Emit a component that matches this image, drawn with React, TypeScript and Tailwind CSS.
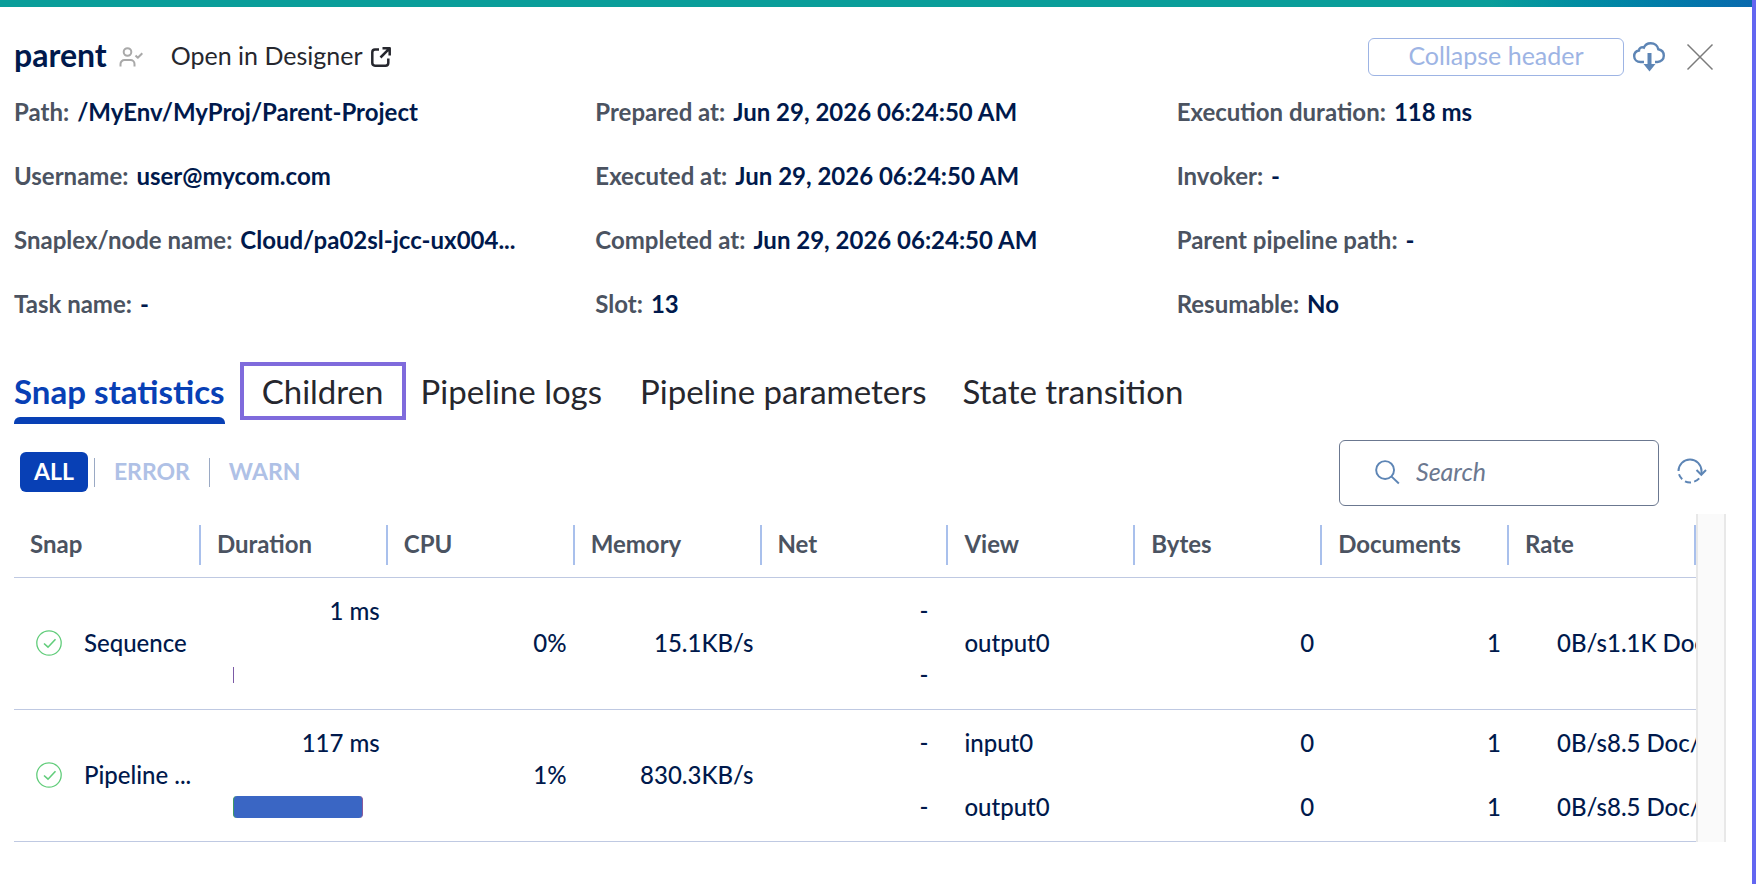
import {useState} from 'react';
import clsx from 'clsx';

interface Fact {
  label: string;
  value: string;
}

interface SnapView {
  view: string;
  bytes: string;
  documents: string;
  rate: string;
}

interface SnapRow {
  name: string;
  durationMs: number;
  cpu: string;
  memory: string;
  net: string[];
  views: SnapView[];
}

const TOTAL_MS = 118;

const factColumns: Fact[][] = [
  [
    {label: 'Path', value: '/MyEnv/MyProj/Parent-Project'},
    {label: 'Username', value: 'user@mycom.com'},
    {label: 'Snaplex/node name', value: 'Cloud/pa02sl-jcc-ux004...'},
    {label: 'Task name', value: '-'},
  ],
  [
    {label: 'Prepared at', value: 'Jun 29, 2026 06:24:50 AM'},
    {label: 'Executed at', value: 'Jun 29, 2026 06:24:50 AM'},
    {label: 'Completed at', value: 'Jun 29, 2026 06:24:50 AM'},
    {label: 'Slot', value: '13'},
  ],
  [
    {label: 'Execution duration', value: '118 ms'},
    {label: 'Invoker', value: '-'},
    {label: 'Parent pipeline path', value: '-'},
    {label: 'Resumable', value: 'No'},
  ],
];

const tabs = [
  {name: 'Snap statistics', className: ''},
  {name: 'Children', className: 'mx-[15px] w-[166px] border-4 border-[#7f6bdc] leading-[50px]'},
  {name: 'Pipeline logs', className: 'mr-[38px]'},
  {name: 'Pipeline parameters', className: 'mr-9'},
  {name: 'State transition', className: ''},
];

const levels = ['ALL', 'ERROR', 'WARN'];
const columns = ['Snap', 'Duration', 'CPU', 'Memory', 'Net', 'View', 'Bytes', 'Documents', 'Rate'];

const rows: SnapRow[] = [
  {
    name: 'Sequence',
    durationMs: 1,
    cpu: '0%',
    memory: '15.1KB/s',
    net: ['-', '-'],
    views: [{view: 'output0', bytes: '0', documents: '1', rate: '0B/s1.1K Doc/s'}],
  },
  {
    name: 'Pipeline ...',
    durationMs: 117,
    cpu: '1%',
    memory: '830.3KB/s',
    net: ['-', '-'],
    views: [
      {view: 'input0', bytes: '0', documents: '1', rate: '0B/s8.5 Doc/s'},
      {view: 'output0', bytes: '0', documents: '1', rate: '0B/s8.5 Doc/s'},
    ],
  },
];

function UserCheckIcon() {
  return (
    <svg width="24" height="22" viewBox="0 0 24 22" fill="none" stroke="#a9a9a9" strokeWidth="2" strokeLinejoin="round">
      <circle cx="8.5" cy="6" r="3.8"/>
      <path d="M1.500 20.500V18a4 4 0 0 1 4-4h6a4 4 0 0 1 4 4v2.500"/>
      <path d="m16.500 9.500 2.300 2.300 4.500-4.500"/>
    </svg>
  );
}

function OpenIcon() {
  return (
    <svg width="20" height="20" viewBox="0 0 20 20" fill="none" stroke="#26272e" strokeWidth="2.500" strokeLinejoin="round">
      <path d="M8 2.500H4A2.800 2.800 0 0 0 1.300 5.300V16A2.800 2.800 0 0 0 4 18.700h10.500a2.800 2.800 0 0 0 2.800-2.700v-4.500"/>
      <path d="M9.500 10.500 18.300 1.700M11.500 1.300h7.200v7.200"/>
    </svg>
  );
}

function CloudIcon() {
  return (
    <svg width="32" height="30" viewBox="0 0 32 30" fill="none" stroke="#5d85b5" strokeWidth="2.400">
      <path d="M11 20H7.500C4 20 1.200 17.600 1.200 14.200c0-3 2-5.200 4.800-5.700 0-2.600 2.400-3.900 4.900-2.900C12 2.800 14.700 1.200 17.700 1.200c4 0 7 2.500 7.600 6.100 3.200.6 5.500 3.200 5.500 6.400 0 3.600-2.800 6.300-6.300 6.300H22"/>
      <path d="M16.500 11v12" strokeWidth="4"/>
      <path d="M10.500 22h12l-6 7.500Z" fill="#5d85b5" stroke="none"/>
    </svg>
  );
}

function CloseIcon() {
  return (
    <svg width="28" height="28" viewBox="0 0 28 28" fill="none" stroke="#7b7b7b" strokeWidth="1.500">
      <path d="m1.500 1.500 25 25M26.500 1.500l-25 25"/>
    </svg>
  );
}

function SearchIcon() {
  return (
    <svg width="25" height="25" viewBox="0 0 26 26" fill="none" stroke="#5d85b5" strokeWidth="2">
      <circle cx="10.500" cy="10.500" r="9.300"/>
      <path d="m17 17 7.800 7.500"/>
    </svg>
  );
}

function RefreshIcon() {
  return (
    <svg width="30" height="26" viewBox="0 0 30 26" fill="none" stroke="#5d85b5" strokeWidth="2">
      <path d="M1.500 13a11.500 11.500 0 0 1 23 0v3"/>
      <path d="m19.500 12 4.800 4.800L29 12"/>
      <path d="M2 16.200a11.500 11.500 0 0 0 3.200 5M8 23.300a11.500 11.500 0 0 0 6 1.200M17.200 23.600a11.500 11.500 0 0 0 5-3.200"/>
    </svg>
  );
}

function SuccessIcon() {
  return (
    <svg className="shrink-0" width="26" height="26" viewBox="0 0 26 26" fill="none" stroke="#62cd7b" strokeWidth="1.300">
      <circle cx="13" cy="13" r="12.200"/>
      <path d="m8 13.500 4 3.700 7.500-8" strokeWidth="1.600"/>
    </svg>
  );
}

function DurationBar({ms}: {ms: number}) {
  return (
    <div className="ml-8 mr-6 flex h-8 items-center">
      {ms > 1 ? (
        <div
          className="h-[22px] rounded border-x border-l-[#3f9a63] border-r-[#8a5a9a] bg-[#3a66c4]"
          style={{width: `${(ms / TOTAL_MS) * 100}%`}}
        />
      ) : (
        <div className="h-4 w-px bg-[#7b5aa6]"/>
      )}
    </div>
  );
}

function Header() {
  return (
    <header className="flex h-[38px] items-center">
      <h1 className="pb-1 text-[32px]/[38px] font-bold">parent</h1>
      <span className="ml-3"><UserCheckIcon/></span>
      <a href="#designer" className="ml-7 flex items-center gap-2 text-[25px] text-[#26272e]">
        <span className="pb-0.5">Open in Designer</span>
        <OpenIcon/>
      </a>
      <button className="ml-auto h-[38px] w-64 rounded-md border border-[#9db4e4] pb-1 text-[25px]/8 text-[#9db4e4]">
        Collapse header
      </button>
      <button className="ml-[9px]" aria-label="Download"><CloudIcon/></button>
      <button className="ml-[21px] mr-3" aria-label="Close"><CloseIcon/></button>
    </header>
  );
}

function Facts() {
  return (
    <div className="mt-5 grid grid-cols-3 gap-8">
      {factColumns.map((facts, i) => (
        <dl key={i} className="space-y-8">
          {facts.map((fact) => (
            <div key={fact.label} className="flex gap-2 whitespace-nowrap text-2xl/8 font-bold">
              <dt className="text-[#4b5361]">{fact.label}:</dt>
              <dd>{fact.value}</dd>
            </div>
          ))}
        </dl>
      ))}
    </div>
  );
}

function Stack({items, className}: {items: string[]; className?: string}) {
  return (
    <div className={clsx('flex flex-col gap-8 whitespace-nowrap', className)}>
      {items.map((item, i) => <div key={i}>{item}</div>)}
    </div>
  );
}

function SnapTable() {
  return (
    <div className="mt-2 flex">
      <div className="min-w-0 flex-1 overflow-hidden">
        <table className="w-full table-fixed border-separate border-spacing-0">
          <thead>
            <tr className="h-16">
              {columns.map((column) => (
                <th key={column} className="border-b border-[#bfc9e2] p-0 pb-0.5 text-left text-2xl font-bold text-[#4b5361]">
                  <div className="flex h-10 items-center border-r-2 border-[#a9c0ec] pb-0.5 pl-4">{column}</div>
                </th>
              ))}
            </tr>
          </thead>
          <tbody className="text-2xl/8 font-medium">
            {rows.map((row) => (
              <tr key={row.name} className="h-33 *:border-b *:border-[#bfc9e2] *:px-0 *:pb-0.5 *:pt-0">
                <td>
                  <div className="flex items-center gap-[22px] whitespace-nowrap pl-[22px]"><SuccessIcon/>{row.name}</div>
                </td>
                <td>
                  <div className="h-16 pr-2 text-right">{row.durationMs} ms</div>
                  <DurationBar ms={row.durationMs}/>
                </td>
                <td><Stack items={[row.cpu]} className="pr-2 text-right"/></td>
                <td><Stack items={[row.memory]} className="pr-2 text-right"/></td>
                <td><Stack items={row.net} className="pr-5 text-right"/></td>
                <td><Stack items={row.views.map((v) => v.view)} className="pl-4"/></td>
                <td><Stack items={row.views.map((v) => v.bytes)} className="pr-2 text-right"/></td>
                <td><Stack items={row.views.map((v) => v.documents)} className="pr-2 text-right"/></td>
                <td><Stack items={row.views.map((v) => v.rate)} className="pl-12"/></td>
              </tr>
            ))}
          </tbody>
        </table>
      </div>
      {/* Scrollbar gutter */}
      <div className="w-[30px] border-x-2 border-[#e8e8e8] bg-[#fafafa]"/>
    </div>
  );
}

export default function App() {
  const [tab, setTab] = useState('Snap statistics');
  const [level, setLevel] = useState('ALL');
  const [query, setQuery] = useState('');

  return (
    <div className="flex min-h-screen bg-white font-['Lato',sans-serif] text-[#00194c]">
      <div className="min-w-0 flex-1">
        <div className="h-[7px] bg-linear-to-r from-[#0a9e9a] from-85% to-[#0a6aae]"/>
        <main className="pl-3.5 pr-[26px] pt-[31px]">
          <Header/>
          <Facts/>

          <nav className="mt-[42px] flex h-[62px] items-start text-[33px]/[58px]">
            {tabs.map(({name, className}) => (
              <button
                key={name}
                onClick={() => setTab(name)}
                className={clsx('whitespace-nowrap', className, name === tab ? 'font-bold text-[#0840b5]' : 'text-[#26272e]')}
              >
                {name}
                {name === tab && <div className="-mt-[3px] h-[7px] rounded-t-md bg-[#0840b5]"/>}
              </button>
            ))}
          </nav>

          <div className="mt-4 flex items-center">
            <div className="mb-0.5 ml-1.5 flex items-center text-[23px] font-bold">
              {levels.map((name, i) => (
                <div key={name} className="flex items-center">
                  {i > 0 && <div className="mx-1.5 h-[29px] w-px bg-[#9aa9c4]"/>}
                  <button
                    onClick={() => setLevel(name)}
                    className={clsx('h-10 rounded-md pb-0.5', name === level ? 'bg-[#0840b5] px-3.5 text-white' : 'px-[13px] text-[#afc1e6]')}
                  >
                    {name}
                  </button>
                </div>
              ))}
            </div>
            <label className="ml-auto flex h-[66px] w-80 items-center gap-4 rounded-md border border-[#6b7890] pb-0.5 pl-[35px] pr-4">
              <SearchIcon/>
              <input
                value={query}
                onChange={(e) => setQuery(e.target.value)}
                placeholder="Search"
                aria-label="Search"
                className="min-w-0 flex-1 text-[25px] italic outline-none placeholder:text-[#6b7890]"
              />
            </label>
            <button className="mb-1 ml-[18px] mr-[19px]" aria-label="Refresh"><RefreshIcon/></button>
          </div>

          <SnapTable/>
        </main>
      </div>
      <div className="w-1 bg-[#6366f1]"/>
    </div>
  );
}
